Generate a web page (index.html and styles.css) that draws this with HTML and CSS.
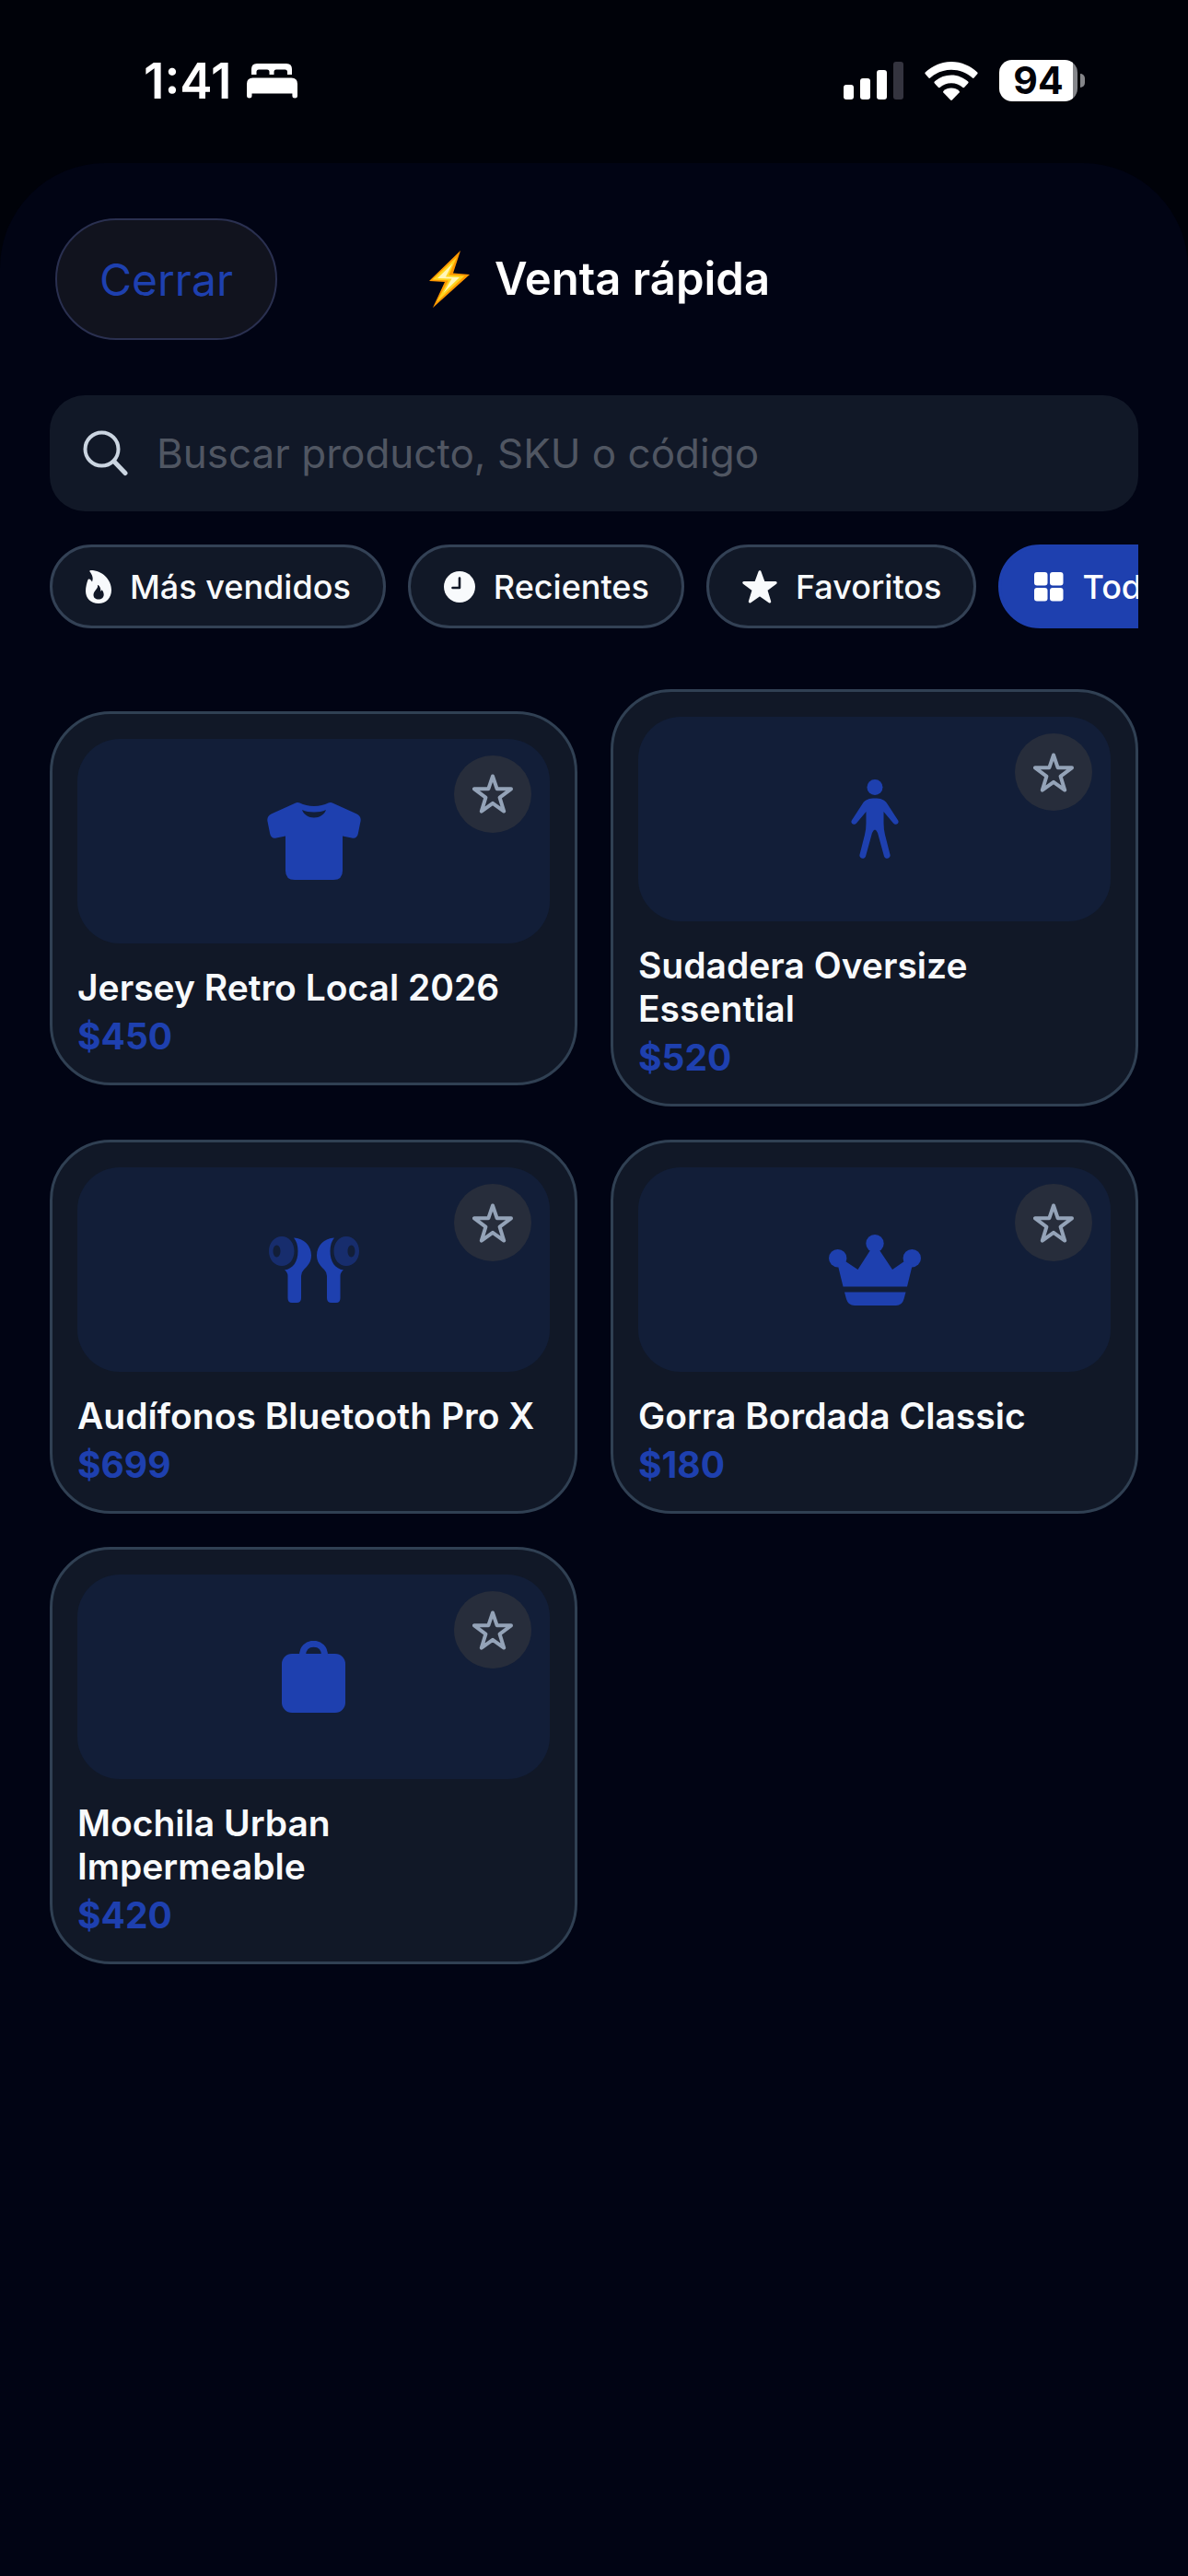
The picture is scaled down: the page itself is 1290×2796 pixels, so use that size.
FILE: index.html
```html
<!DOCTYPE html>
<html lang="es">
<head>
    <meta charset="UTF-8">
    <meta name="viewport" content="width=device-width, initial-scale=1.0">
    <title>Venta rápida</title>
    <link rel="stylesheet" href="styles.css">
</head>
<body>
    <!-- shared icons -->
    <svg class="defs" aria-hidden="true">
        <symbol id="star-outline" viewBox="0 0 44 43">
            <path d="M22 2.5 26.6 16.2 42 16.3 29.6 25.6 34.2 40.6 22 31.8 9.8 40.6 14.4 25.6 2 16.3 17.4 16.2Z" fill="none" stroke="currentColor" stroke-width="4" stroke-linejoin="round"/>
        </symbol>
    </svg>

    <header class="status-bar">
        <div class="status-left">
            <span class="time">1:41</span>
            <svg class="bed" viewBox="0 0 55 38" fill="#fff">
                <path d="M5 12V6Q5 0 11 0H43Q49 0 49 6V12H44V9Q44 6.500 41.500 6.500H32Q29.500 6.500 29.500 9V12H24.500V9Q24.500 6.500 22 6.500H13Q10.500 6.500 10.500 9V12Z"/>
                <path d="M0 35V22Q0 15.500 6.500 15.500H48.500Q55 15.500 55 22V35Q55 37.500 52.200 37.500T49.400 35V32.500H5.500V35Q5.500 37.500 2.700 37.500T0 35Z"/>
            </svg>
        </div>
        <div class="status-right">
            <svg class="signal" viewBox="0 0 65 41" fill="#fff">
                <rect x="0" y="25" width="11" height="16" rx="3"/>
                <rect x="18" y="18" width="11" height="23" rx="3"/>
                <rect x="36" y="9" width="11" height="32" rx="3"/>
                <rect x="54" y="0" width="11" height="41" rx="3" fill="#34343f"/>
            </svg>
            <svg class="wifi" viewBox="0 0 58 42" fill="#fff">
                <path d="M29 0C40 0 50 4.500 57.300 11.500Q58 12.300 57.300 13.200L53.600 17.500Q52.800 18.400 51.900 17.500C45.600 11.900 37.500 8.800 29 8.800S12.400 11.900 6.100 17.500Q5.200 18.400 4.400 17.500L.7 13.200Q0 12.300.7 11.500C8 4.500 18 0 29 0Z"/>
                <path d="M29 14.500C36 14.500 42.300 17.200 47.200 21.600Q48 22.400 47.300 23.200L43.200 27.800Q42.400 28.600 41.500 27.900C38.100 24.900 33.800 23.200 29 23.200S19.900 24.900 16.500 27.900Q15.600 28.600 14.800 27.800L10.700 23.200Q10 22.400 10.800 21.600C15.700 17.200 22 14.500 29 14.500Z"/>
                <path d="M29 28.600C32.300 28.600 35.200 29.800 37.500 31.800Q38.300 32.600 37.600 33.400L29.900 41.500Q29 42.300 28.100 41.500L20.400 33.400Q19.700 32.600 20.500 31.800C22.800 29.800 25.700 28.600 29 28.600Z"/>
            </svg>
            <div class="battery"><span class="battery-level">94</span></div>
        </div>
    </header>

    <main class="sheet">
        <div class="sheet-header">
            <button type="button" class="close">Cerrar</button>
            <h1 class="title">
                <svg class="bolt" viewBox="0 0 44 62">
                    <path d="M34 0 0 33 17 34 4 62 44 26 26 24.500Z" fill="#ff9800"/>
                    <path d="M30 7 3.500 31.500 21 32.500 8 56 38.500 27.500 21.500 26.500Z" fill="#ffd51e"/>
                    <path d="M25.500 14 9 30 24.500 30.500 15.500 46 33 29 18 28.500Z" fill="#fff6b8"/>
                </svg>
                Venta rápida
            </h1>
        </div>

        <label class="search">
            <svg class="search-icon" viewBox="0 0 50 50" fill="none" stroke="#cbd5e1" stroke-linecap="round">
                <circle cx="20.500" cy="20.500" r="18" stroke-width="4"/>
                <path d="M34 34 46 46.500" stroke-width="5"/>
            </svg>
            <input type="search" placeholder="Buscar producto, SKU o código" aria-label="Buscar producto">
        </label>

        <div class="chips">
            <button type="button" class="chip">
                <svg width="28" height="36" viewBox="0 0 28 36" fill="currentColor">
                    <path fill-rule="evenodd" d="M4.500 1.500C4 .6 4.700 0 5.600 0 18 0 28 10 28 21.500 28 30 22.300 36 14 36 5.600 36 0 30.400 0 22.500 0 18 1.500 13 2.400 10.400Q3 8.900 4.200 9.600 6 10.600 7 12.600C8.600 8.500 7.300 5.200 4.500 1.500ZM13 16.500C13.800 20 8.500 22.300 8.500 26.800 8.500 30 10.800 31.500 14 31.500S19.700 29.600 19.700 26.500C19.700 24.500 18.800 22.600 17.600 21.300Q16.900 22.400 16.100 22.700C16.700 20.100 15.600 17.400 13.600 16Q12.900 15.700 13 16.500Z"/>
                </svg>
                Más vendidos
            </button>
            <button type="button" class="chip">
                <svg width="34" height="34" viewBox="0 0 34 34">
                    <circle cx="17" cy="17" r="17" fill="currentColor"/>
                    <path d="M17 7.500V18H9.500" fill="none" stroke="#111827" stroke-width="2.600" stroke-linecap="round" stroke-linejoin="round"/>
                </svg>
                Recientes
            </button>
            <button type="button" class="chip">
                <svg width="38" height="36" viewBox="0 0 38 36" fill="currentColor" stroke="currentColor" stroke-width="3" stroke-linejoin="round">
                    <path d="M19 1.700 23.200 13.300 36.200 13.500 25.800 21.200 29.700 34 19 26.600 8.300 34 12.200 21.200 1.800 13.500 14.800 13.300Z"/>
                </svg>
                Favoritos
            </button>
            <button type="button" class="chip active">
                <svg width="32" height="32" viewBox="0 0 32 32" fill="currentColor">
                    <rect width="14.500" height="14.500" rx="3"/>
                    <rect x="17" width="14.500" height="14.500" rx="3"/>
                    <rect y="17" width="14.500" height="14.500" rx="3"/>
                    <rect x="17" y="17" width="14.500" height="14.500" rx="3"/>
                </svg>
                Todos
            </button>
        </div>

        <section class="products">
            <article class="card">
                <div class="thumb">
                    <svg width="102" height="84" viewBox="0 0 102 84" fill="currentColor">
                        <path fill-rule="evenodd" d="M30.500.8Q33-.7 35.500.6C40 3 45 4 51 4S62 3 66.500.6Q69-.7 71.500.8L97 12.300Q102.300 15 101.600 20L98.800 34Q97.500 39.700 92 38.600L82 36.500V74Q82 84 72 84H30Q20 84 20 74V36.500L10 38.600Q4.500 39.700 3.200 34L.4 20Q-.3 15 5 12.300ZM38 8C40 13.500 45 16.500 51 16.500S62 13.500 64 8C60 9.800 56 10.500 51 10.500S42 9.800 38 8Z"/>
                    </svg>
                    <button type="button" class="fav" aria-label="Favorito"><svg><use href="#star-outline"/></svg></button>
                </div>
                <h2 class="name">Jersey Retro Local 2026</h2>
                <p class="price">$450</p>
            </article>

            <article class="card">
                <div class="thumb">
                    <svg width="52" height="86" viewBox="0 0 52 86" fill="currentColor">
                        <circle cx="26" cy="8.500" r="8.500"/>
                        <path d="M26 20.500C32 20.500 36.500 21.500 39.500 26.500L51.200 44.500C53 48 48.500 50.500 46 47.500L35.500 35V47Q35.500 54 37 60L42.600 82C43.200 86 37.500 87.400 36 83.500L29 58Q26 51 23 58L16 83.500C14.500 87.400 8.800 86 9.400 82L15 60Q16.500 54 16.500 47V35L6 47.500C3.500 50.500-1 48 .8 44.500L12.500 26.500C15.500 21.500 20 20.500 26 20.500Z"/>
                    </svg>
                    <button type="button" class="fav" aria-label="Favorito"><svg><use href="#star-outline"/></svg></button>
                </div>
                <h2 class="name">Sudadera Oversize Essential</h2>
                <p class="price">$520</p>
            </article>

            <article class="card">
                <div class="thumb">
                    <svg width="98" height="72" viewBox="0 0 98 72" fill="currentColor">
                        <g id="bud">
                            <path fill-rule="evenodd" opacity=".45" d="M14 0C22 0 27.500 7 27.500 16S22 32 14 32 0 25 0 16 6 0 14 0ZM8.500 9.500C6 9.500 4.500 12.500 4.500 16S6 22.500 8.500 22.500 12.500 19.500 12.500 16 11 9.500 8.500 9.500Z"/>
                            <path d="M27 1.500C38 2 46 10 46 20.500 46 28 42 32 38 36Q35 39 35 43V67Q35 72 30 72H25Q20.500 72 20.500 67V43Q20.500 39 17 36.500C26 35 31.500 28 31.500 16 31.500 10 30 5 27 1.500Z"/>
                        </g>
                        <use href="#bud" transform="matrix(-1 0 0 1 98 0)"/>
                    </svg>
                    <button type="button" class="fav" aria-label="Favorito"><svg><use href="#star-outline"/></svg></button>
                </div>
                <h2 class="name">Audífonos Bluetooth Pro X</h2>
                <p class="price">$699</p>
            </article>

            <article class="card">
                <div class="thumb">
                    <svg width="100" height="77" viewBox="0 0 100 77" fill="currentColor">
                        <circle cx="50" cy="9.700" r="9.700"/>
                        <circle cx="9.700" cy="25.700" r="9.700"/>
                        <circle cx="90.300" cy="25.700" r="9.700"/>
                        <path d="M45 17H55L69 38 82 29 90.500 34 85 56.500H15.500L10 34 18 29 31.500 38Z"/>
                        <path d="M17 62.500H83.500L81.500 70Q79.500 77 73 77H28Q21 77 19 70Z"/>
                    </svg>
                    <button type="button" class="fav" aria-label="Favorito"><svg><use href="#star-outline"/></svg></button>
                </div>
                <h2 class="name">Gorra Bordada Classic</h2>
                <p class="price">$180</p>
            </article>

            <article class="card">
                <div class="thumb">
                    <svg width="69" height="78" viewBox="0 0 69 78">
                        <rect y="14" width="69" height="64" rx="11" fill="currentColor"/>
                        <path d="M22.500 16C22.500 8 27.500 3.300 34.500 3.300S46.500 8 46.500 16" fill="none" stroke="currentColor" stroke-width="7"/>
                    </svg>
                    <button type="button" class="fav" aria-label="Favorito"><svg><use href="#star-outline"/></svg></button>
                </div>
                <h2 class="name">Mochila Urban Impermeable</h2>
                <p class="price">$420</p>
            </article>
        </section>
    </main>
</body>
</html>
```
FILE: styles.css
```css
* { box-sizing: border-box; margin: 0; padding: 0; }
body { min-height: 100vh; display: flex; flex-direction: column; background: #000209; color: #f8fafc; font-family: Inter, "Liberation Sans", sans-serif; }
button, input { font: inherit; color: inherit; border: none; background: none; }
button { cursor: pointer; }
svg { display: block; flex: none; }
.defs { position: absolute; width: 0; height: 0; }

/* status bar */
.status-bar { display: flex; justify-content: space-between; align-items: center; height: 177px; padding: 0 112px 2px 156px; color: #fff; }
.status-left, .status-right { display: flex; align-items: center; }
.status-left { gap: 17px; }
.status-right { gap: 23px; }
.time { font-size: 53px; font-weight: 600; line-height: 60px; }
.bed { width: 55px; height: 38px; }
.signal { width: 65px; height: 41px; }
.wifi { width: 58px; height: 42px; }
.battery { position: relative; width: 85px; height: 45px; margin-right: 8px; border-radius: 14px; background: linear-gradient(90deg, #fff 94%, #85868a 94%); }
.battery::after { content: ""; position: absolute; left: 88px; top: 15px; width: 5px; height: 15px; border-radius: 0 5px 5px 0; background: #85868a; }
.battery-level { display: block; text-align: center; font-size: 41px; font-weight: 700; line-height: 45px; color: #000209; }

/* sheet */
.sheet { flex: 1; padding: 60px 54px; border-radius: 114px 114px 0 0; background: #010414; }
.sheet-header { display: grid; grid-template-columns: 1fr auto 1fr; align-items: center; margin: 0 6px 60px; }
.close { justify-self: start; height: 132px; padding: 0 46px; border: 2px solid #2a3050; border-radius: 66px; background: #11131e; color: #1e40af; font-size: 48px; }
.title { display: flex; align-items: center; gap: 27px; padding-left: 12px; color: #fff; font-size: 49px; font-weight: 600; line-height: 60px; }
.bolt { width: 44px; height: 62px; }

.search { display: flex; align-items: center; gap: 30px; height: 126px; padding: 0 36px; border-radius: 38px; background: #111827; }
.search-icon { width: 50px; height: 50px; }
.search input { flex: 1; min-width: 0; outline: none; font-size: 44px; }
.search input::placeholder { color: #505662; opacity: 1; }

/* the row scrolls sideways, the last chip runs past the edge */
.chips { display: flex; gap: 24px; margin-top: 36px; overflow-x: auto; scrollbar-width: none; }
.chip { display: flex; flex: none; align-items: center; gap: 20px; height: 91px; padding: 0 35px 0 36px; border: 3px solid #334155; border-radius: 46px; background: #111827; font-size: 36px; font-weight: 500; white-space: nowrap; }
.chip.active { border-color: #1e40af; background: #1e40af; color: #fff; }

/* product grid */
.products { display: grid; grid-template-columns: 1fr 1fr; gap: 36px; align-items: center; margin-top: 66px; }
.card { padding: 27px; border: 3px solid #304053; border-radius: 66px; background: #111827; }
.thumb { position: relative; display: flex; align-items: center; justify-content: center; height: 222px; margin-bottom: 24px; border-radius: 46px; background: #121e38; color: #1e40af; }
.fav { position: absolute; top: 18px; right: 20px; display: flex; align-items: center; justify-content: center; width: 84px; height: 84px; border-radius: 50%; background: #272d3b; color: #94a3b8; }
.fav svg { width: 44px; height: 43px; }
.name { font-size: 39px; font-weight: 600; line-height: 47px; }
.price { margin-top: 6px; color: #1e40af; font-size: 39px; font-weight: 700; line-height: 47px; }
```
